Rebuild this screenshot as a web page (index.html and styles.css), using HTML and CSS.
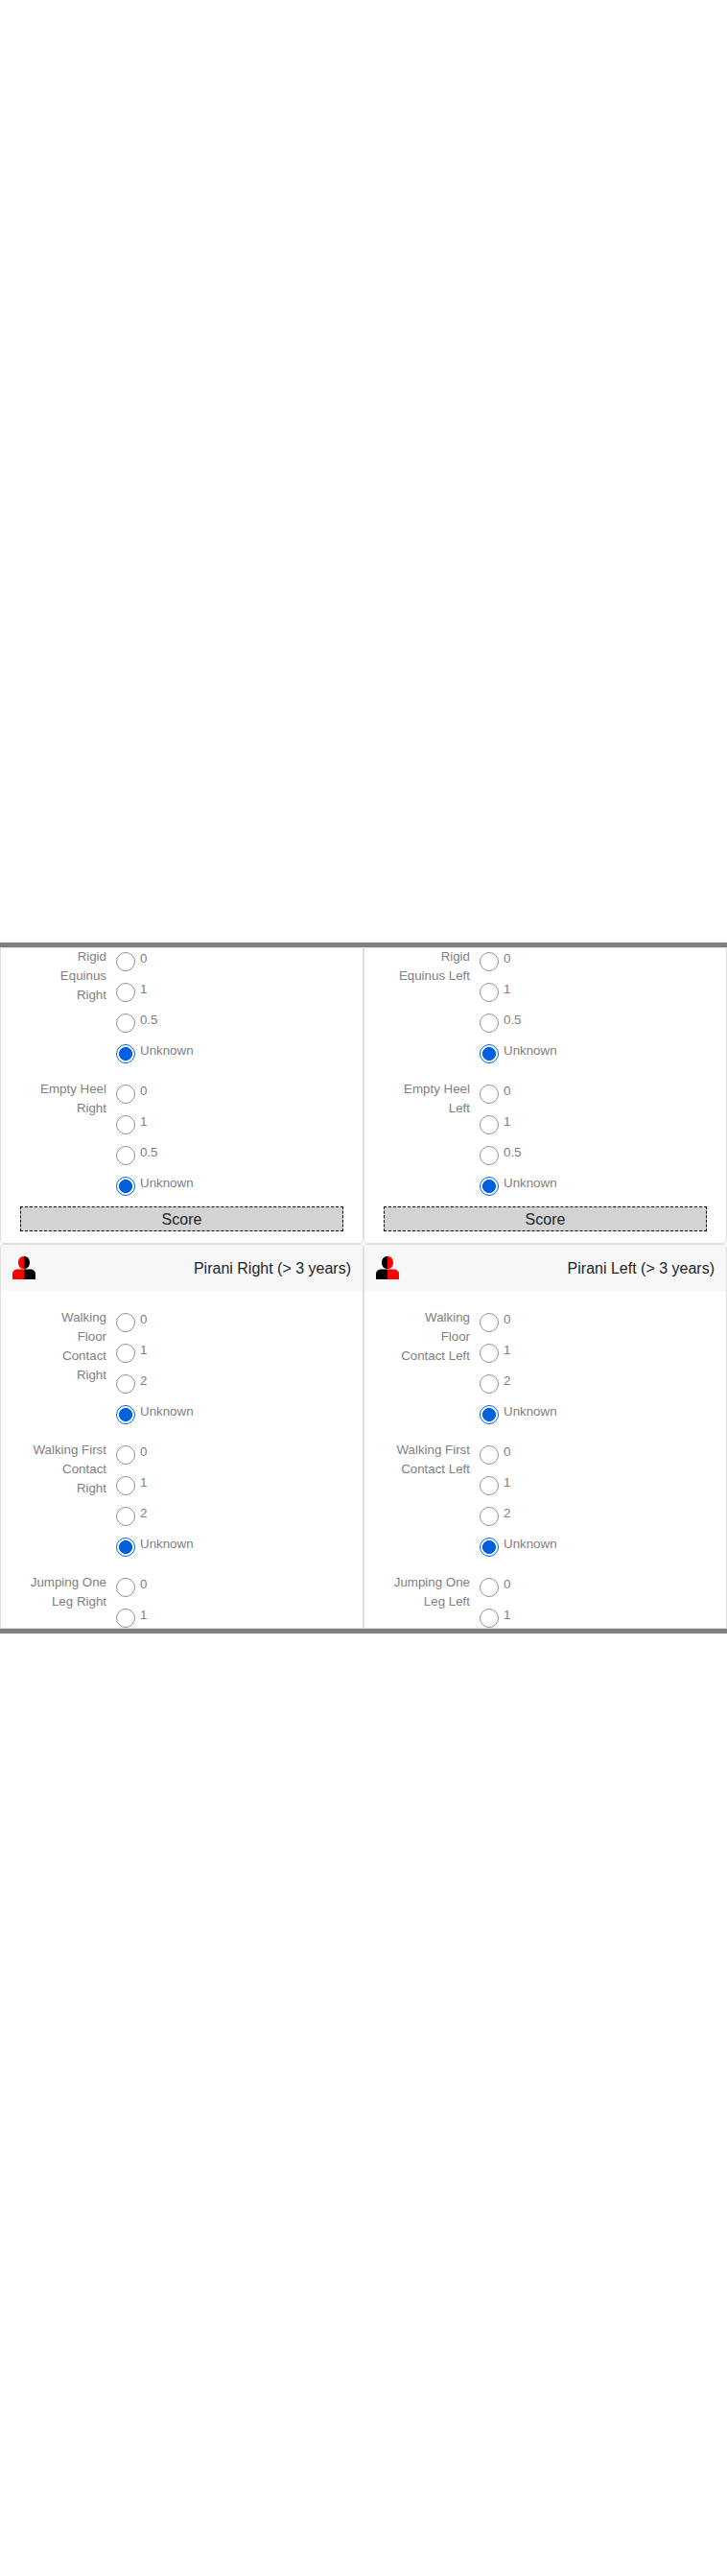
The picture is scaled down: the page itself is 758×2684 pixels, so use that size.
FILE: index.html
```html
<!DOCTYPE html>
<html lang="en">
<head>
<meta charset="utf-8">
<title>Pirani</title>
<link rel="stylesheet" href="styles.css">
</head>
<body>
<main class="viewport">
  <div class="grid" id="grid"></div>
</main>
<script src="app.js"></script>
</body>
</html>
```
FILE: styles.css
```css
* { box-sizing: border-box; }
body {
  margin: 0;
  height: 2684px;
  padding-top: 982px;
  background: #fff;
  color: #212529;
  font: 16px/24px "Liberation Sans", Arial, sans-serif;
}
.viewport {
  height: 720px;
  overflow: hidden;
  border-top: 5px solid gray;
  border-bottom: 5px solid gray;
}
.grid {
  height: 710px;
  border-bottom: 1px solid #dfdfdf;
  overflow: hidden;
  display: grid;
  grid-template-columns: 1fr 1fr;
  grid-template-rows: 309px 500px;
}
.card {
  border: 1px solid #dfdfdf;
  border-radius: 4px;
  background: #fff;
}
.card-continued {
  border-top-left-radius: 0;
  border-top-right-radius: 0;
}
.card-header {
  height: 48px;
  padding: 0 12px;
  display: flex;
  align-items: center;
  justify-content: space-between;
  background: #f7f7f7;
  border-radius: 3px 3px 0 0;
}
.card-title { padding-top: 2px; }
.person { display: block; width: 24px; height: 24px; }
.card-body { padding: 18px 20px 12px; }
.card-continued .card-body { padding-top: 0; margin-top: -1px; }
.field {
  display: grid;
  grid-template-columns: 90px 1fr;
  column-gap: 10px;
  margin-bottom: 10px;
  color: gray;
  font-size: 13.333px;
  line-height: 20px;
}
.field-label { text-align: right; }
.option {
  height: 32px;
  display: flex;
  align-items: flex-start;
  gap: 5px;
  padding-top: 2px;
}
.radio {
  appearance: none;
  width: 20px;
  height: 20px;
  margin: 3px 0 0;
  border: 1px solid #8f8f9d;
  border-radius: 50%;
  background: #fff;
}
.radio:checked {
  border-color: #0060df;
  background: radial-gradient(circle, #0060df 6.7px, #fff 7.3px);
}
.score {
  height: 26px;
  margin-top: -6px;
  padding-top: 1px;
  border: 1px dashed #000;
  background: #d3d3d3;
  line-height: 24px;
  text-align: center;
}
```
FILE: app.js
```js
const sides = ["Right", "Left"];
const card1 = {
  Right: ["Rigid<br>Equinus<br>Right", "Empty Heel<br>Right"],
  Left: ["Rigid<br>Equinus Left", "Empty Heel<br>Left"]
};
const card2 = {
  Right: ["Walking<br>Floor<br>Contact<br>Right", "Walking First<br>Contact<br>Right", "Jumping One<br>Leg Right"],
  Left: ["Walking<br>Floor<br>Contact Left", "Walking First<br>Contact Left", "Jumping One<br>Leg Left"]
};

const field = (label, values, name) => `
  <div class="field">
    <div class="field-label">${label}</div>
    <div>${values.map(v => `
      <label class="option"><input class="radio" type="radio" name="${name}"${v === "Unknown" ? " checked" : ""}><span>${v}</span></label>`).join("")}
    </div>
  </div>`;

const person = (left, right) => `
  <svg class="person" viewBox="0 0 24 24">
    <path fill="${left}" d="M12 0C8.300 0 6 2.700 6 6.500S8.300 13 12 13zM12 13.500H6C2 13.500 0 15.500 0 18.500V24H12z"/>
    <path fill="${right}" d="M12 0c3.700 0 6 2.700 6 6.500S15.700 13 12 13zM12 13.500h6c4 0 6 2 6 5V24H12z"/>
    <path stroke="#777" stroke-width=".8" d="M8 13.300h8"/>
  </svg>`;

const upper = sides.map(s => `
  <section class="card card-continued"><div class="card-body">
    ${card1[s].map((l, i) => field(l, ["0", "1", "0.5", "Unknown"], "a" + s + i)).join("")}
    <div class="score">Score</div>
  </div></section>`);

const lower = sides.map(s => `
  <section class="card">
    <header class="card-header">${s === "Right" ? person("red", "black") : person("black", "red")}<span class="card-title">Pirani ${s} (&gt; 3 years)</span></header>
    <div class="card-body">
    ${card2[s].map((l, i) => field(l, l.startsWith("Jumping") ? ["0", "1"] : ["0", "1", "2", "Unknown"], "b" + s + i)).join("")}
    </div>
  </section>`);

document.getElementById("grid").innerHTML = upper.concat(lower).join("");
```
